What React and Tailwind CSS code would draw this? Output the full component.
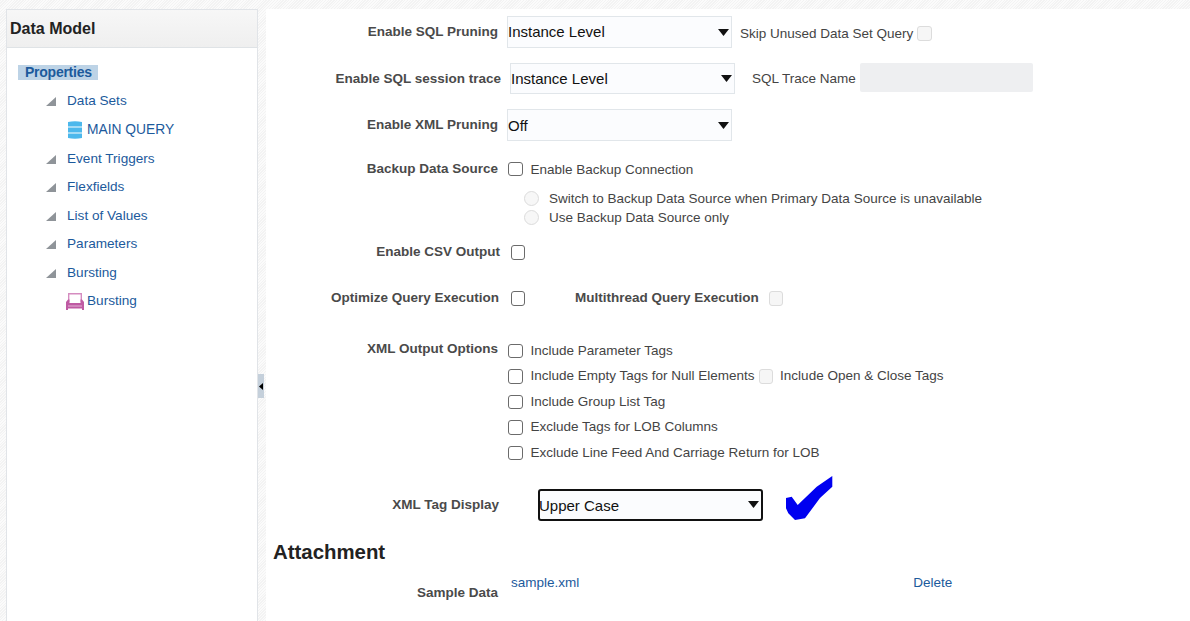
const font = "font-['Liberation_Sans',Arial,sans-serif]";

function Tri() {
  return (
    <svg width="10" height="9" viewBox="0 0 10 9" className="shrink-0">
      <path d="M0 9 L10 0 L10 9 Z" fill="#8f9499" />
    </svg>
  );
}

function DbIcon() {
  return (
    <svg width="14" height="18" viewBox="0 0 14 18" className="shrink-0">
      <path d="M0 1 Q7 -0.5 14 1 V5.5 H0 Z" fill="#4db8ec" />
      <rect x="0" y="6.5" width="14" height="5" fill="#4db8ec" />
      <path d="M0 12.5 H14 V17 Q7 18.5 0 17 Z" fill="#4db8ec" />
    </svg>
  );
}

function PrinterIcon() {
  return (
    <svg width="18" height="17" viewBox="0 0 18 17" className="shrink-0">
      <path d="M2.7 9 V0.7 H15.3 V9" fill="#fff" stroke="#d58cc0" strokeWidth="1.4" />
      <path d="M2 6.5 H3.5 V10 H14.5 V6.5 H16 L18 9 V17 H16 V15.5 H2 V17 H0 V9 Z" fill="#bf5aa3" />
      <rect x="2" y="12.5" width="14" height="1" fill="#e4b3d5" />
    </svg>
  );
}

function TreeItem({ children, className = "" }) {
  return (
    <div className={"flex items-center h-[28px] pl-[39px] text-[13.6px] text-[#1c5a9c] " + className}>
      <Tri />
      <span className="ml-[11px]">{children}</span>
    </div>
  );
}

function Sidebar() {
  return (
    <div className="w-[252px] h-[612px] ml-[6px] shrink-0 bg-white border-x border-t border-[#e1e4e8] box-border">
      <div className="h-[38px] pl-[3px] flex items-center border-b border-[#dfe3e6] bg-gradient-to-b from-[#f7f7f7] to-[#efefef] text-[16px] font-bold text-[#222]">
        Data Model
      </div>
      <div className="pt-[17px]">
        <div className="ml-[11px] w-[80px] h-[15px] pl-[7px] flex items-center bg-[#bdd3e6] text-[14px] font-bold text-[#1c5a9c] tracking-[-0.25px]">
          Properties
        </div>
        <div className="mt-[7px]">
          <TreeItem>Data Sets</TreeItem>
          <div className="flex items-center h-[28px] mt-[1px] pl-[61px] gap-[5px] text-[13.8px] text-[#1c5a9c]">
            <DbIcon />
            <span>MAIN QUERY</span>
          </div>
          <TreeItem className="mt-[1px]">Event Triggers</TreeItem>
          <TreeItem>Flexfields</TreeItem>
          <TreeItem className="mt-[1px]">List of Values</TreeItem>
          <TreeItem>Parameters</TreeItem>
          <TreeItem className="mt-[1px]">Bursting</TreeItem>
          <div className="flex items-center h-[28px] pl-[59px] gap-[3px] text-[13.6px] text-[#1c5a9c]">
            <PrinterIcon />
            <span>Bursting</span>
          </div>
        </div>
      </div>
    </div>
  );
}

function Splitter() {
  return (
    <div className="w-[8px] shrink-0 flex flex-col pt-[365px]">
      <div className="w-[6px] h-[24px] bg-[#c5d0db] flex items-center justify-center">
        <svg width="4" height="7" viewBox="0 0 4 7">
          <path d="M4 0 V7 L0 3.5 Z" fill="#000" />
        </svg>
      </div>
    </div>
  );
}

function Label({ children, className = "" }) {
  return (
    <div className={"text-[13.5px] leading-[16px] font-bold text-[#4a4a4a] whitespace-nowrap " + className}>
      {children}
    </div>
  );
}

function Select({ value, className = "", textClass = "mt-[2px]" }) {
  return (
    <div className={"w-[225px] flex items-center justify-between bg-[#fbfcfe] pr-[2px] text-[15px] text-[#111] shrink-0 box-border " + className}>
      <span className={textClass}>{value}</span>
      <svg width="11" height="7" viewBox="0 0 11 7">
        <path d="M0 0 H11 L5.5 7 Z" fill="#111" />
      </svg>
    </div>
  );
}

function Check({ disabled, className = "" }) {
  return (
    <span
      className={
        "block w-[14.5px] h-[14.5px] rounded-[3px] border shrink-0 box-border " +
        (disabled ? "border-[#dcdcdc] bg-[#f6f6f6] " : "border-[#6b6b6b] bg-white ") +
        className
      }
    />
  );
}

function Radio() {
  return <span className="block w-[15px] h-[15px] rounded-full border border-[#dcdcdc] bg-[#f7f7f7] shrink-0 box-border" />;
}

function OptionRow({ children, className = "" }) {
  return (
    <div className={"h-[25.5px] flex items-center text-[13.5px] text-[#444] whitespace-nowrap " + className}>
      <Check className="ml-[242px] mr-[8px]" />
      {children}
    </div>
  );
}

function Main() {
  return (
    <div className="flex-1 bg-white h-[612px] overflow-hidden pt-[7px]">
      <div className="flex items-start h-[32px]">
        <Label className="w-[232px] text-right mt-[8px]">Enable SQL Pruning</Label>
        <Select value="Instance Level" textClass="mt-[0px]" className="ml-[9px] h-[32px] border border-[#e1e6ea]" />
        <span className="ml-[8px] mt-[10px] text-[13.5px] leading-[16px] text-[#444]">Skip Unused Data Set Query</span>
        <Check disabled className="ml-[4px] mt-[10px]" />
      </div>
      <div className="flex items-start h-[31px] mt-[15px]">
        <Label className="w-[235px] text-right mt-[8px]">Enable SQL session trace</Label>
        <Select value="Instance Level" className="ml-[9px] h-[31px] border border-[#e1e6ea]" />
        <span className="ml-[17px] mt-[8px] text-[13.5px] leading-[16px] text-[#444]">SQL Trace Name</span>
        <div className="ml-[4px] w-[173px] h-[29px] rounded-[2px] bg-[#eeeff1]" />
      </div>
      <div className="flex items-start h-[32px] mt-[15px]">
        <Label className="w-[232px] text-right mt-[8px]">Enable XML Pruning</Label>
        <Select value="Off" className="ml-[9px] h-[32px] border border-[#e1e6ea]" />
      </div>
      <div className="flex items-center h-[20px] mt-[18px]">
        <Label className="w-[232px] text-right -mt-[1px]">Backup Data Source</Label>
        <Check className="ml-[10px] mr-[8px]" />
        <span className="mt-[2px] text-[13.5px] text-[#444]">Enable Backup Connection</span>
      </div>
      <div className="flex items-center h-[19px] mt-[9.5px] pl-[258px] gap-[10px] text-[13.5px] text-[#444]">
        <Radio />
        <span className="mt-[2px]">Switch to Backup Data Source when Primary Data Source is unavailable</span>
      </div>
      <div className="flex items-center h-[19px] pl-[258px] gap-[10px] text-[13.5px] text-[#444]">
        <Radio />
        <span className="mt-[2px]">Use Backup Data Source only</span>
      </div>
      <div className="flex items-center h-[20px] mt-[15.5px]">
        <Label className="w-[234px] text-right -mt-[1px]">Enable CSV Output</Label>
        <Check className="ml-[10.5px] mt-[1px]" />
      </div>
      <div className="flex items-center h-[20px] mt-[26px]">
        <Label className="w-[233px] text-right -mt-[1px]">Optimize Query Execution</Label>
        <Check className="ml-[11.5px] mt-[1px]" />
        <Label className="ml-[50px] -mt-[1px]">Multithread Query Execution</Label>
        <Check disabled className="ml-[10px] mt-[1px]" />
      </div>
      <div className="mt-[30.3px] relative">
        <Label className="absolute left-0 top-[3px] w-[232px] text-right">XML Output Options</Label>
        <OptionRow>Include Parameter Tags</OptionRow>
        <OptionRow>
          Include Empty Tags for Null Elements
          <Check disabled className="ml-[4px] mr-[7px]" />
          Include Open &amp; Close Tags
        </OptionRow>
        <OptionRow>Include Group List Tag</OptionRow>
        <OptionRow>Exclude Tags for LOB Columns</OptionRow>
        <OptionRow>Exclude Line Feed And Carriage Return for LOB</OptionRow>
      </div>
      <div className="flex items-start h-[45px] mt-[10.2px]">
        <Label className="w-[233px] text-right mt-[21px]">XML Tag Display</Label>
        <Select value="Upper Case" textClass="mt-[3px] -ml-[1px]" className="ml-[39px] mt-[13px] h-[32px] border-2 border-[#111] rounded-[3px]" />
        <svg width="48" height="45" viewBox="0 0 48 45" className="ml-[22px] shrink-0">
          <path d="M1 22 L6.7 20.7 L12.7 29 L31.7 10.7 L47.3 0 V10.7 L35 22 L20 42.3 L10 44 L3.3 37.3 L1 32.3 Z" fill="#0000f0" />
        </svg>
      </div>
      <div className="mt-[19px] pl-[7px] text-[20.4px] leading-[24px] font-bold text-[#222]">Attachment</div>
      <div className="flex items-start mt-[8px] h-[40px]">
        <Label className="w-[232px] text-right mt-[13px]">Sample Data</Label>
        <span className="ml-[13px] mt-[3px] text-[13.5px] leading-[16px] text-[#1c5a9c]">sample.xml</span>
        <span className="ml-[334px] mt-[3px] text-[13.5px] leading-[16px] text-[#1c5a9c]">Delete</span>
      </div>
    </div>
  );
}

export default function App() {
  return (
    <div className={font + " h-[621px] w-[1190px] overflow-hidden pt-[9px] flex bg-[repeating-linear-gradient(135deg,#f3f3f3_0,#f3f3f3_1px,#fbfbfb_1px,#fbfbfb_2px)]"}>
      <Sidebar />
      <Splitter />
      <Main />
    </div>
  );
}
